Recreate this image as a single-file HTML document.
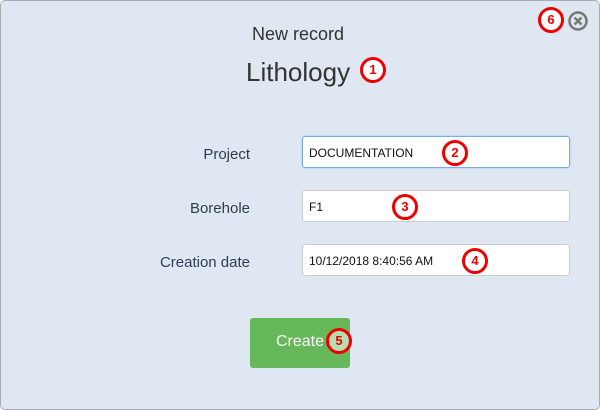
<!DOCTYPE html><html><head><style>
body{margin:0;width:600px;height:410px;overflow:hidden;background:#fff;font-family:"Liberation Sans",sans-serif}
.d{position:absolute;left:0;top:0;width:598px;height:408px;border:1px solid #a9adb2;border-radius:5px;background:#dfe8f2}
.t{position:absolute;color:#333}
.l{position:absolute;right:349px;font-size:15px;color:#2f3d4d}
.i{position:absolute;left:301px;height:32px;background:#fff;border:1px solid #ccc;border-radius:3px;font-size:12px;color:#111;line-height:32px;padding-left:6px;box-sizing:border-box;width:268px}
.b{position:absolute;width:20px;height:20px;border:3px solid #e00;border-radius:50%;background:#fff;color:#e00;font-weight:bold;font-size:13px;text-align:center;line-height:20px}
</style></head><body><div class="d">
<div class="t" style="left:251px;top:23px;font-size:18px">New record</div>
<div class="t" style="left:245px;top:56px;font-size:26px">Lithology</div>
<div class="l" style="top:145px">Project</div>
<div class="l" style="top:199px">Borehole</div>
<div class="l" style="top:253px">Creation date</div>
<div class="i" style="top:135px;border-color:#7aaee0;box-shadow:0 0 2px #9cc3ee">DOCUMENTATION</div>
<div class="i" style="top:189px">F1</div>
<div class="i" style="top:243px">10/12/2018 8:40:56 AM</div>
<div style="position:absolute;left:249px;top:317px;width:100px;height:50px;background:#66b85a;border-radius:3px;color:#fff;font-size:16px;line-height:48px;text-indent:26px">Create</div>
<svg style="position:absolute;left:566px;top:9px" width="22" height="22"><circle cx="11" cy="11" r="8.5" fill="none" stroke="#777" stroke-width="2.5"/><path d="M7.5 7.5L14.5 14.5M14.5 7.5L7.5 14.5" stroke="#777" stroke-width="2.5"/></svg>
<div class="b" style="left:359px;top:56px">1</div>
<div class="b" style="left:441px;top:139px">2</div>
<div class="b" style="left:391px;top:193px">3</div>
<div class="b" style="left:461px;top:247px">4</div>
<div class="b" style="left:325px;top:327px;background:#b7ddb0">5</div>
<div class="b" style="left:537px;top:6px">6</div>
</div></body></html>
